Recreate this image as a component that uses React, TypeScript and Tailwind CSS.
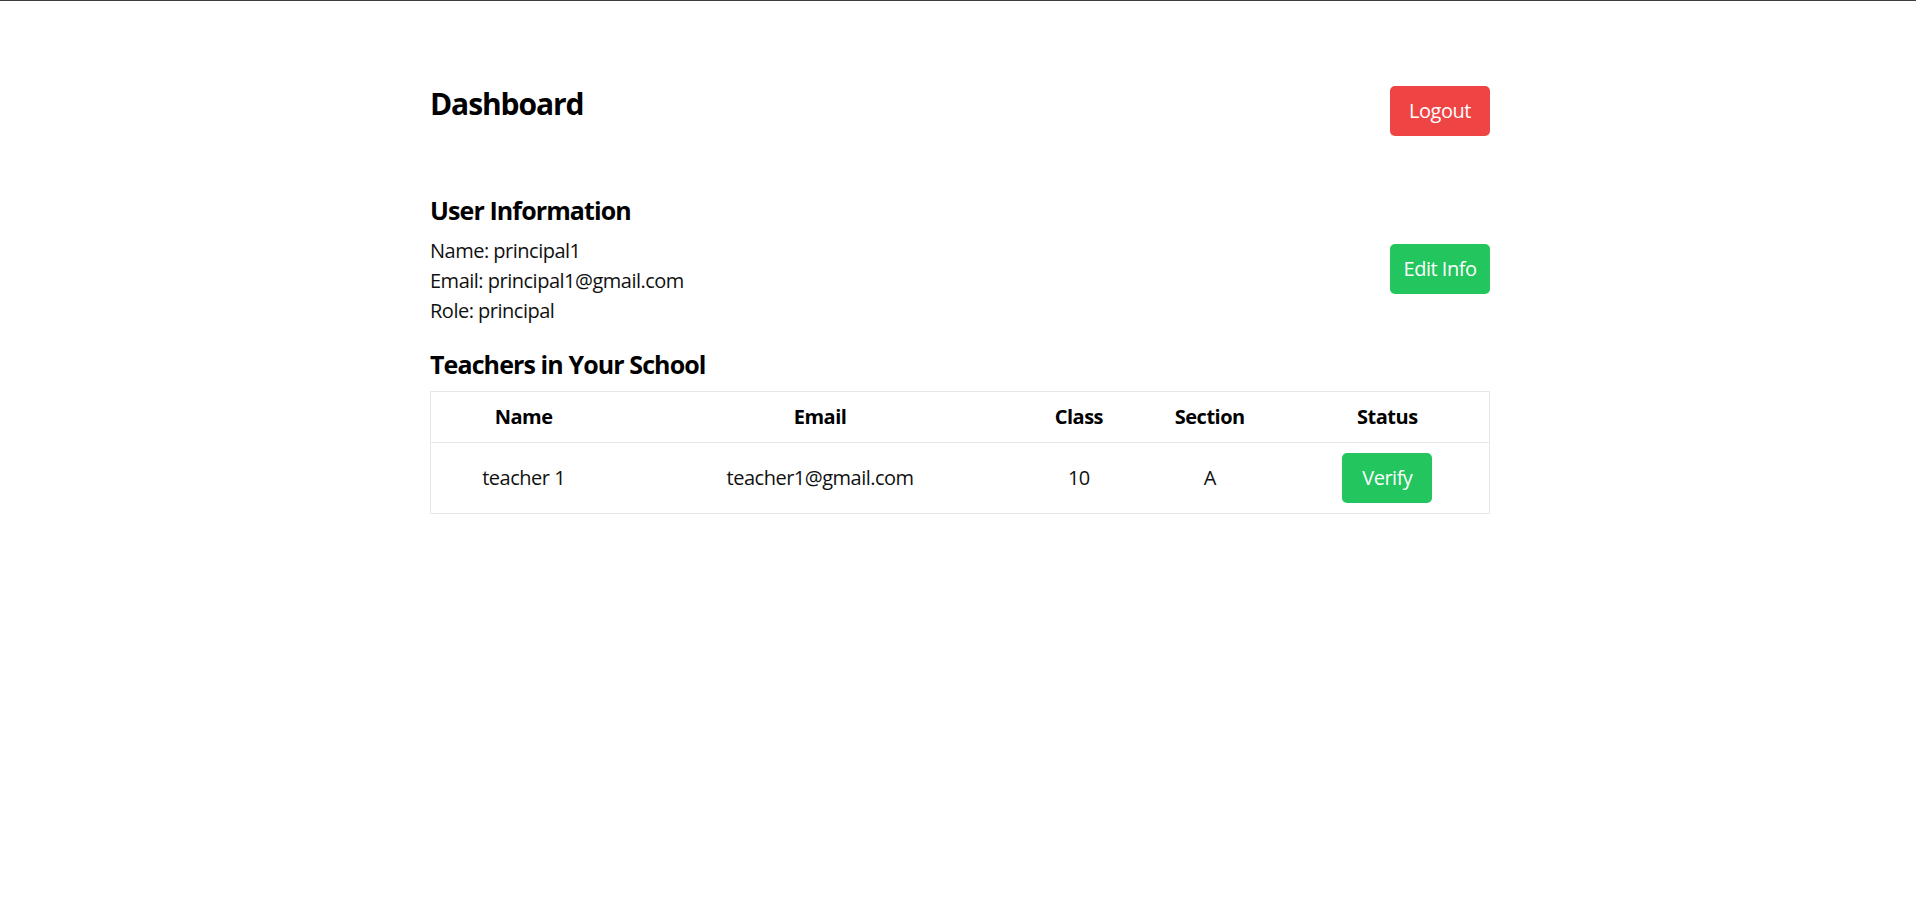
const teachers = [
  { id: 1, name: "teacher 1", email: "teacher1@gmail.com", className: "10", section: "A" },
];

export default function App() {
  return (
    <div className="min-h-screen border-t border-[#3c3c3c] bg-white font-['Open_Sans',sans-serif] text-[20px] leading-[30px] tracking-[-0.5px] text-[#111]">
      <div className="py-[50px] pl-[52px] pr-[48px]">
        <div className="mx-auto max-w-[1120px] p-[30px]">
          <div className="mb-[50px] flex items-center justify-between">
            <h1 className="mb-[17px] pt-[3px] text-[30px] font-bold leading-[40px] tracking-[-1.1px] text-black">Dashboard</h1>
            <button className="h-[50px] w-[100px] rounded-[5px] bg-[#ef4444] text-white">Logout</button>
          </div>

          <div className="flex items-center justify-between">
            <div className="pb-[20px]">
              <h2 className="mb-[8px] pt-[2px] text-[25px] font-bold leading-[35px] tracking-[-0.9px] text-black">User Information</h2>
              <p>Name: principal1</p>
              <p>Email: principal1@gmail.com</p>
              <p>Role: principal</p>
            </div>
            <button className="h-[50px] w-[100px] rounded-[5px] bg-[#22c55e] text-white">Edit Info</button>
          </div>

          <h2 className="mb-[9px] pt-[1px] text-[25px] font-bold leading-[35px] tracking-[-0.9px] text-black">Teachers in Your School</h2>
          <table className="w-full border-collapse border border-[#e5e7eb]">
            <thead>
              <tr className="border-b border-[#e5e7eb]">
                <th className="w-[186px] py-[10px] font-bold text-black">Name</th>
                <th className="w-[408px] py-[10px] font-bold text-black">Email</th>
                <th className="w-[110px] py-[10px] font-bold text-black">Class</th>
                <th className="w-[152px] py-[10px] font-bold text-black">Section</th>
                <th className="w-[204px] py-[10px] font-bold text-black">Status</th>
              </tr>
            </thead>
            <tbody>
              {teachers.map((t) => (
                <tr key={t.id} className="border-b border-[#e5e7eb] text-center">
                  <td className="py-[10px]">{t.name}</td>
                  <td className="py-[10px]">{t.email}</td>
                  <td className="py-[10px]">{t.className}</td>
                  <td className="py-[10px]">{t.section}</td>
                  <td className="py-[10px]">
                    <button className="h-[50px] rounded-[5px] bg-[#22c55e] px-[20px] text-white">Verify</button>
                  </td>
                </tr>
              ))}
            </tbody>
          </table>
        </div>
      </div>
    </div>
  );
}
